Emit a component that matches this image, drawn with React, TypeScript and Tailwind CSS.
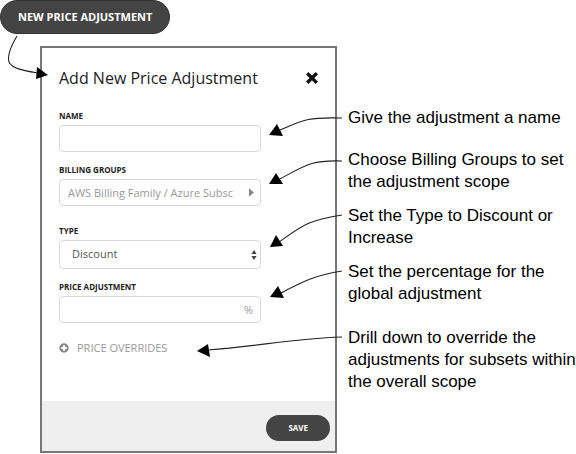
import type React from "react"

import { useState } from "react"

const inputClass =
  "w-full h-[27px] px-2 bg-white border border-[#d6d6d6] rounded-[4px] text-[11px] text-[#555555] placeholder:text-[#999999] outline-none"

interface FieldProps {
  id: string
  label: string
  className?: string
  children: React.ReactNode
}

function Field({ id, label, className = "", children }: FieldProps) {
  return (
    <div className={className}>
      <label htmlFor={id} className="block mb-[2px] text-[8px] leading-[14px] font-bold text-[#222222]">
        {label}
      </label>
      <div className="flex items-center">{children}</div>
    </div>
  )
}

function CloseIcon() {
  return (
    <svg width="12" height="12" viewBox="0 0 12 12" aria-hidden="true">
      <path d="M2.4 2.4L9.6 9.6M9.6 2.4L2.4 9.6" stroke="#111111" strokeWidth="3.4" strokeLinecap="square" />
    </svg>
  )
}

function CaretIcon() {
  return (
    <svg className="shrink-0 -ml-3" width="5" height="9" viewBox="0 0 5 9" aria-hidden="true">
      <path d="M0 0.2L5 4.5L0 8.8Z" fill="#888888" />
    </svg>
  )
}

function SortIcon() {
  return (
    <svg className="shrink-0 -ml-[10px] pointer-events-none" width="6" height="10" viewBox="0 0 6 10" aria-hidden="true">
      <path d="M3 0L5.6 4H0.4Z" fill="#444444" />
      <path d="M3 10L5.6 6H0.4Z" fill="#444444" />
    </svg>
  )
}

function PlusCircle() {
  return (
    <svg width="10" height="10" viewBox="0 0 10 10" aria-hidden="true">
      <circle cx="5" cy="5" r="4.7" fill="#888888" />
      <path d="M5 2.3v5.4M2.3 5h5.4" stroke="#ffffff" strokeWidth="2.2" />
    </svg>
  )
}

function Arrows() {
  return (
    <svg
      className="absolute top-0 left-0 pointer-events-none"
      width="576"
      height="454"
      viewBox="0 0 576 454"
      aria-hidden="true"
    >
      <g fill="none" stroke="#222222" strokeWidth="1.1">
        <path d="M17 36C11 46 7 55 9 62C12 69 26 71 38 73" />
        <path d="M342 118C306 117 303 120 278 131" />
        <path d="M342 161C310 160 306 165 278 180" />
        <path d="M342 215C308 220 302 226 279 242" />
        <path d="M342 271C315 275 302 282 279 294" />
        <path d="M342 337C290 339 260 346 208 350" />
      </g>
      <g fill="#000000">
        <path d="M48 75L37 67L36 79Z" />
        <path d="M269 135L277 124L283 136Z" />
        <path d="M269 184L276 173L283 184Z" />
        <path d="M270 247L276 235L283 246Z" />
        <path d="M270 297L278 286L284 298Z" />
        <path d="M197 351L208 344L210 357Z" />
      </g>
    </svg>
  )
}

export default function App() {
  const [name, setName] = useState("")
  const [groups, setGroups] = useState("")
  const [type, setType] = useState("discount")
  const [amount, setAmount] = useState("")

  const handleSubmit = (e: React.FormEvent) => {
    e.preventDefault()
  }

  return (
    <div className="relative bg-white font-['Open_Sans',sans-serif]">
      <button
        type="button"
        className="block h-[34px] px-[17px] bg-[#444444] border border-[#333333] rounded-full text-[11px] font-bold text-white"
      >
        NEW PRICE ADJUSTMENT
      </button>

      <div className="flex items-start gap-[11px] pt-3 pl-10">
        <form onSubmit={handleSubmit} className="w-full max-w-[297px] shrink-0 border-2 border-[#777777] bg-white">
          <div className="px-[17px] pt-4 pb-[45px]">
            <div className="flex items-center justify-between">
              <h1 className="text-base leading-7 text-[#222222]">Add New Price Adjustment</h1>
              <button type="button" aria-label="Close">
                <CloseIcon />
              </button>
            </div>

            <div className="pt-[17px] pr-[57px]">
              <Field id="name" label="NAME">
                <input id="name" type="text" value={name} onChange={(e) => setName(e.target.value)} className={inputClass} />
              </Field>
              <Field id="groups" label="BILLING GROUPS" className="mt-[11px]">
                <input
                  id="groups"
                  type="text"
                  value={groups}
                  onChange={(e) => setGroups(e.target.value)}
                  placeholder="AWS Billing Family / Azure Subsc"
                  className={inputClass}
                />
                <CaretIcon />
              </Field>
              <Field id="type" label="TYPE" className="mt-[18px]">
                <select
                  id="type"
                  value={type}
                  onChange={(e) => setType(e.target.value)}
                  className="w-full h-[29px] px-3 appearance-none bg-white border border-[#d6d6d6] rounded-[4px] text-[11px] text-[#555555] outline-none"
                >
                  <option value="discount">Discount</option>
                  <option value="increase">Increase</option>
                </select>
                <SortIcon />
              </Field>
              <Field id="amount" label="PRICE ADJUSTMENT" className="mt-[11px]">
                <input
                  id="amount"
                  type="text"
                  value={amount}
                  onChange={(e) => setAmount(e.target.value)}
                  className={inputClass}
                />
                <span className="-ml-[17px] text-[11px] leading-4 text-[#999999]">%</span>
              </Field>
            </div>

            <button type="button" className="flex items-center gap-2 mt-[17px] text-[11px] leading-4 text-[#999999]">
              <PlusCircle />
              PRICE OVERRIDES
            </button>
          </div>

          <div className="flex justify-end px-[5px] pt-[14px] pb-[10px] bg-[#efefef]">
            <button
              type="submit"
              className="h-[26px] px-[22px] bg-[#444444] rounded-full text-[8px] font-bold text-white"
            >
              SAVE
            </button>
          </div>
        </form>

        <ul className="flex-1 pt-[61px] font-['Liberation_Sans',sans-serif] text-[17px] leading-[22px] whitespace-nowrap text-black">
          <li>Give the adjustment a name</li>
          <li className="mt-5">
            Choose Billing Groups to set
            <br />
            the adjustment scope
          </li>
          <li className="mt-3">
            Set the Type to Discount or
            <br />
            Increase
          </li>
          <li className="mt-3">
            Set the percentage for the
            <br />
            global adjustment
          </li>
          <li className="mt-[22px]">
            Drill down to override the
            <br />
            adjustments for subsets within
            <br />
            the overall scope
          </li>
        </ul>
      </div>

      <Arrows />
    </div>
  )
}
